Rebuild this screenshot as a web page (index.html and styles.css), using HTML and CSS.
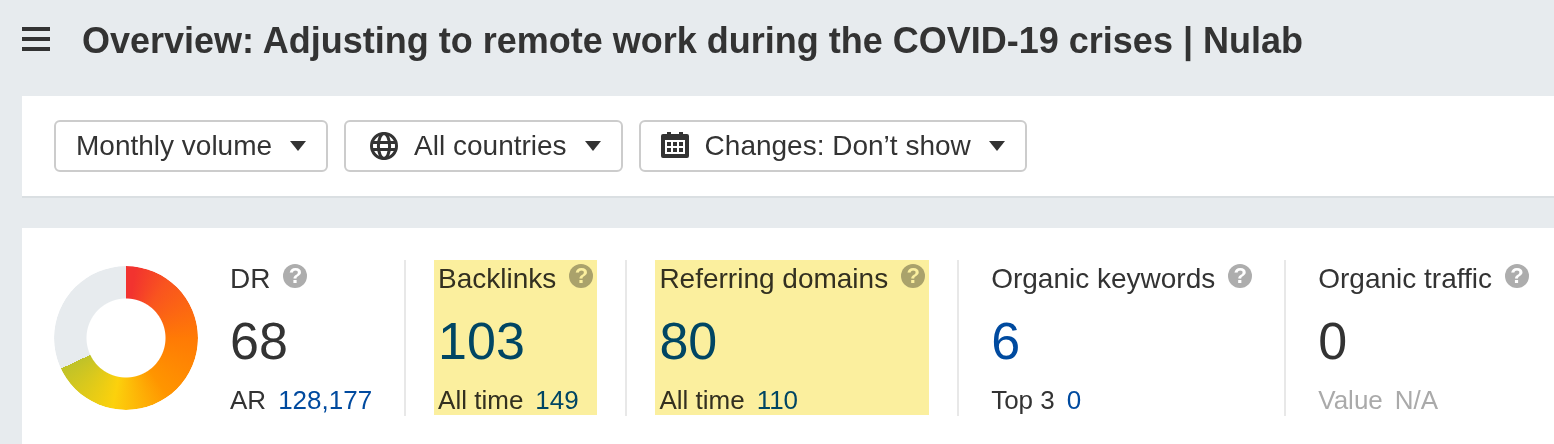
FILE: index.html
```
<!DOCTYPE html>
<html lang="en">
<head>
    <meta charset="UTF-8">
    <meta name="viewport" content="width=device-width, initial-scale=1.0">
    <title>Overview: Adjusting to remote work during the COVID-19 crises | Nulab</title>
    <link rel="stylesheet" href="styles.css">
</head>
<body>

<header class="header">
    <button class="menu-btn" type="button" aria-label="Menu">
        <span></span>
        <span></span>
        <span></span>
    </button>
    <h1>Overview: Adjusting to remote work during the COVID-19 crises | Nulab</h1>
</header>

<main>
    <section class="panel filters">
        <button class="filter-btn" type="button">
            Monthly volume
            <svg class="arrow" viewBox="0 0 16 10" aria-hidden="true"><path d="M0 0h16L8 10z"/></svg>
        </button>
        <button class="filter-btn" type="button">
            <svg class="icon icon-globe" viewBox="0 0 28 28" aria-hidden="true">
                <g fill="none" stroke="#333" stroke-width="3">
                    <circle cx="14" cy="14" r="12.5"/>
                    <ellipse cx="14" cy="14" rx="5.6" ry="12.5"/>
                    <path d="M2 10.5h24M2 17.5h24"/>
                </g>
            </svg>
            All countries
            <svg class="arrow" viewBox="0 0 16 10" aria-hidden="true"><path d="M0 0h16L8 10z"/></svg>
        </button>
        <button class="filter-btn" type="button">
            <svg class="icon" viewBox="0 0 28 28" aria-hidden="true">
                <path fill="#333" fill-rule="evenodd" d="M6 0h4v2h8V0h4v2h4a2 2 0 0 1 2 2v20a2 2 0 0 1-2 2H2a2 2 0 0 1-2-2V4a2 2 0 0 1 2-2h4zM4 8v14h20V8z"/>
                <path fill="#333" d="M6 10h4v4H6zM12 10h4v4h-4zM18 10h4v4h-4zM6 16h4v4H6zM12 16h4v4h-4zM18 16h4v4h-4z"/>
            </svg>
            Changes: Don’t show
            <svg class="arrow" viewBox="0 0 16 10" aria-hidden="true"><path d="M0 0h16L8 10z"/></svg>
        </button>
    </section>

    <section class="panel metrics">
        <div class="donut"></div>

        <div class="metric">
            <div class="metric-label">DR <span class="help">?</span></div>
            <div class="metric-value">68</div>
            <div class="metric-sub">AR <a href="#">128,177</a></div>
        </div>

        <div class="metric highlight">
            <div class="metric-label">Backlinks <span class="help">?</span></div>
            <div class="metric-value"><a href="#">103</a></div>
            <div class="metric-sub">All time <a href="#">149</a></div>
        </div>

        <div class="metric highlight">
            <div class="metric-label">Referring domains <span class="help">?</span></div>
            <div class="metric-value"><a href="#">80</a></div>
            <div class="metric-sub">All time <a href="#">110</a></div>
        </div>

        <div class="metric">
            <div class="metric-label">Organic keywords <span class="help">?</span></div>
            <div class="metric-value"><a href="#">6</a></div>
            <div class="metric-sub">Top 3 <a href="#">0</a></div>
        </div>

        <div class="metric">
            <div class="metric-label">Organic traffic <span class="help">?</span></div>
            <div class="metric-value">0</div>
            <div class="metric-sub muted">Value <span>N/A</span></div>
        </div>
    </section>
</main>

</body>
</html>
```

FILE: styles.css
```
* {
    margin: 0;
    padding: 0;
    box-sizing: border-box;
}
body {
    font-family: "Liberation Sans", Arial, sans-serif;
    font-size: 28px;
    background-color: #e7ebee;
    color: #333;
    padding-left: 22px;
    overflow-x: hidden;
}
a {
    color: #004a9f;
    text-decoration: none;
}
a:hover {
    text-decoration: underline;
}

/* Header */
.header {
    display: flex;
    align-items: center;
    gap: 32px;
    height: 96px;
    padding-bottom: 18px;
}
.menu-btn {
    display: flex;
    flex-direction: column;
    gap: 6px;
    width: 28px;
    border: none;
    background: none;
    cursor: pointer;
}
.menu-btn span {
    height: 4px;
    background-color: #333;
}
h1 {
    padding-top: 4px;
    font-size: 36px;
    line-height: 44px;
    white-space: nowrap;
}

.panel {
    display: flex;
    background-color: #fff;
}

/* Filters */
.filters {
    gap: 16px;
    padding: 24px 32px;
    border-bottom: 2px solid #dadfe2;
    margin-bottom: 30px;
}
.filter-btn {
    display: flex;
    align-items: center;
    gap: 16px;
    height: 52px;
    padding: 0 20px;
    border: 2px solid #ccc;
    border-radius: 6px;
    background-color: #fff;
    color: #333;
    font: inherit;
    white-space: nowrap;
    cursor: pointer;
}
.filter-btn:hover {
    border-color: #999;
}
.icon {
    width: 28px;
    height: 28px;
}
.icon-globe {
    margin-left: 4px;
}
.arrow {
    width: 16px;
    height: 10px;
    margin-left: 2px;
    fill: #333;
}

/* Metrics */
.metrics {
    align-items: center;
    padding: 32px 0 28px 32px;
}
.donut {
    flex: none;
    width: 144px;
    height: 144px;
    border-radius: 50%;
    background: conic-gradient(#f2332f 0%, #f2332f 2%, #f9541f 10%, #ff7a05 25%, #ff9500 40%, #fcd10c 53%, #bfc229 68%, #e7ebee 68%);
    -webkit-mask: radial-gradient(circle, transparent 39px, #000 40px);
    mask: radial-gradient(circle, transparent 39px, #000 40px);
}
.metric {
    position: relative;
    display: flex;
    flex-direction: column;
    gap: 11px;
    padding: 0 32px;
    border-right: 2px solid #e8e8e8;
    white-space: nowrap;
}
.metric:last-child {
    border-right: none;
}
.metric-label {
    display: flex;
    align-items: center;
    gap: 13px;
    line-height: 38px;
}
.metric-value {
    font-size: 52px;
    line-height: 64px;
}
.metric-sub {
    display: flex;
    gap: 12px;
    font-size: 26px;
    line-height: 32px;
}
.muted {
    color: #aaa;
}
.help {
    width: 24px;
    height: 24px;
    margin-bottom: 6px;
    border-radius: 50%;
    background-color: #adadad;
    color: #fff;
    font-size: 22px;
    font-weight: bold;
    line-height: 24px;
    text-align: center;
    cursor: help;
}
/* marker stroke over the metric */
.highlight::after {
    content: "";
    position: absolute;
    top: 0;
    bottom: 1px;
    left: 28px;
    right: 28px;
    background-color: #fbef9e;
    mix-blend-mode: multiply;
    pointer-events: none;
}
```
